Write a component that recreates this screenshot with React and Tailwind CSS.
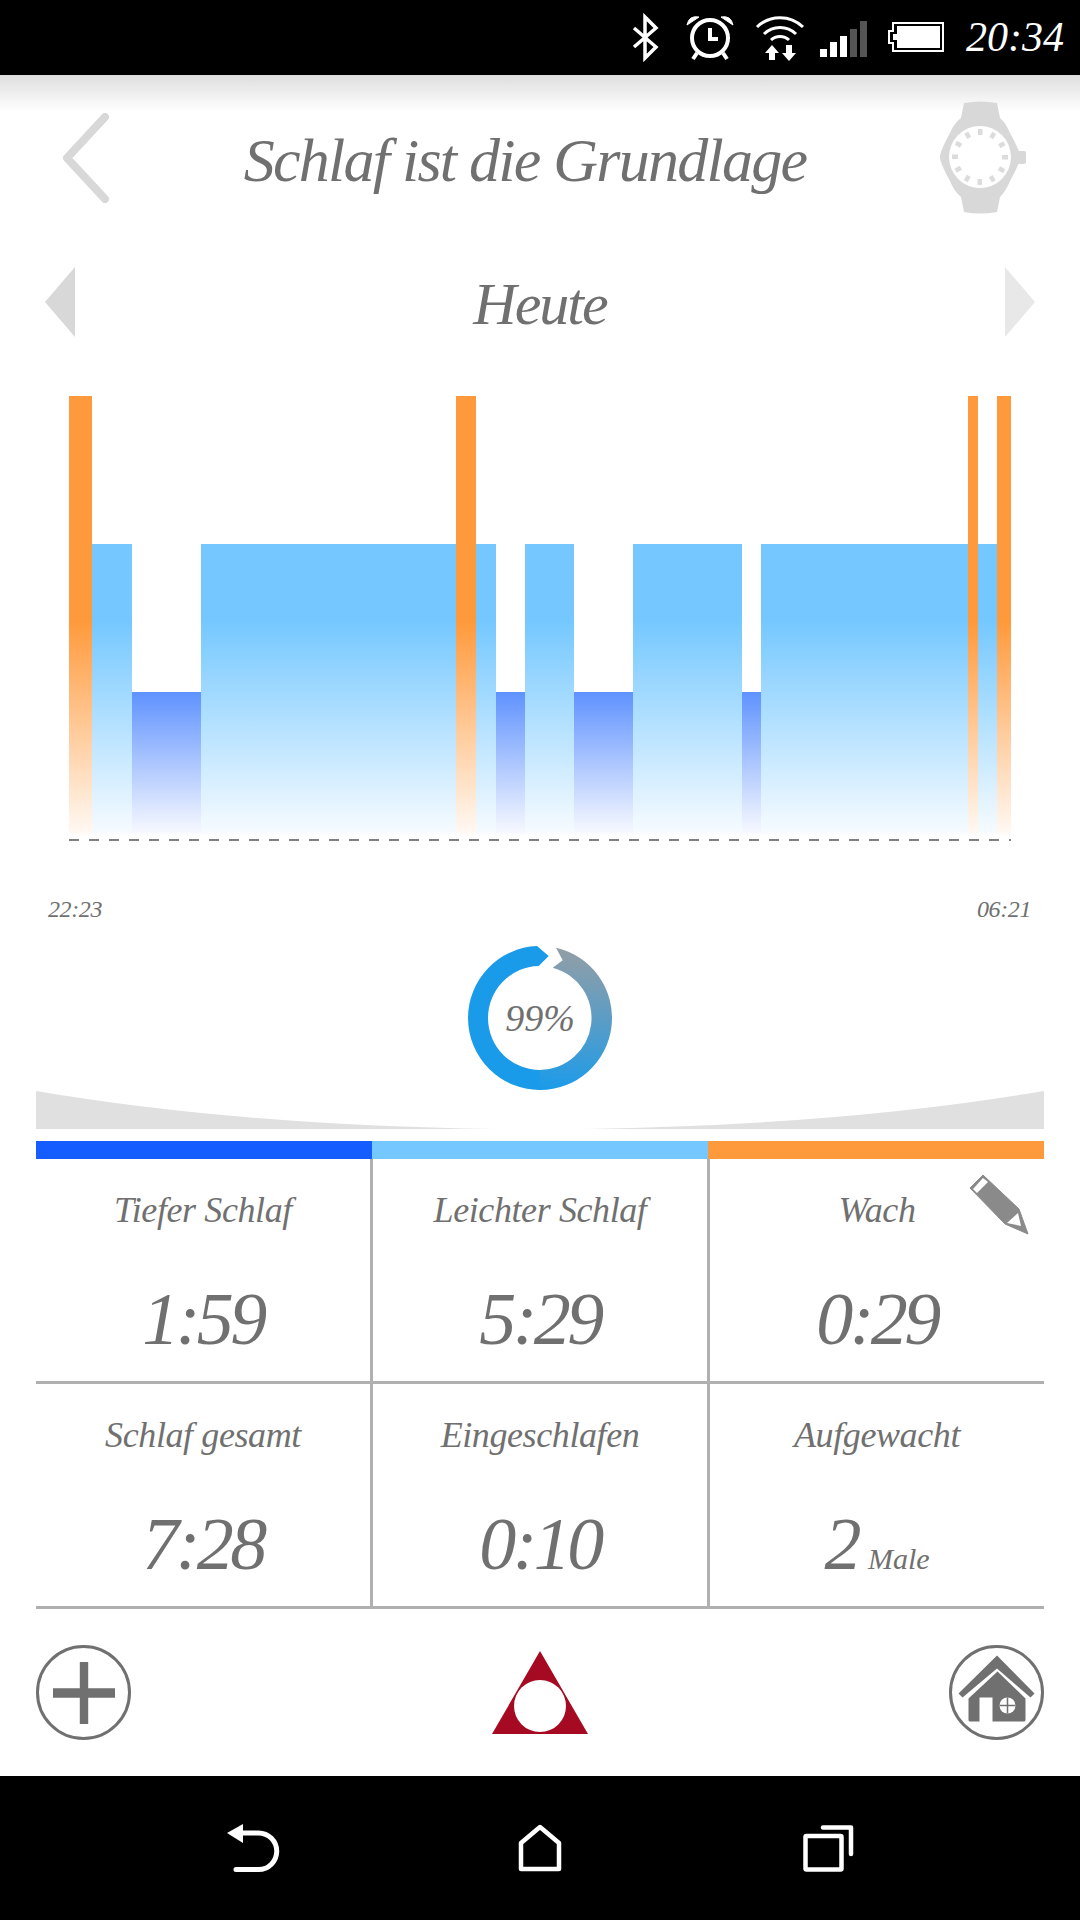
import React from 'react';

// Segment kinds of the sleep chart, each with its own height and fade
const kinds = {
  wake: 'h-[440px] bg-[linear-gradient(to_bottom,#ff9a3c_0,#ff9a3c_226px,#fff8f2_436px,#ffffff_440px)]',
  light: 'h-[292px] bg-[linear-gradient(to_bottom,#75c8ff_0,#75c8ff_78px,#f6fbff_288px,#ffffff_292px)]',
  deep: 'h-[144px] bg-[linear-gradient(to_bottom,#5f92ff_0,#f6f8ff_140px,#ffffff_144px)]',
};

const segments = [
  ['wake', 23], ['light', 40], ['deep', 69], ['light', 255], ['wake', 20], ['light', 20],
  ['deep', 29], ['light', 49], ['deep', 59], ['light', 109], ['deep', 19], ['light', 207],
  ['wake', 10], ['light', 19], ['wake', 14],
];

const stats = [
  { label: 'Tiefer Schlaf', value: '1:59' },
  { label: 'Leichter Schlaf', value: '5:29' },
  { label: 'Wach', value: '0:29', pencil: true },
  { label: 'Schlaf gesamt', value: '7:28' },
  { label: 'Eingeschlafen', value: '0:10' },
  { label: 'Aufgewacht', value: '2', unit: 'Male' },
];

const StatusIcons = () => (
  <>
    <svg width="28" height="50" viewBox="0 0 28 50" className="absolute left-[632px] top-[13px]" fill="none" stroke="#fff" strokeWidth="3.5">
      <path d="M2 15 24 34 13 45V4L24 15 2 34" />
    </svg>
    <svg width="52" height="50" viewBox="0 0 52 50" className="absolute left-[684px] top-[12px]" fill="none" stroke="#fff" strokeWidth="4">
      <circle cx="26" cy="26" r="18" />
      <path d="M26 16V27H34M13 41 9 47M39 41 43 47" />
      <path d="M3 13Q5 3 15 5ZM49 13Q47 3 37 5Z" fill="#fff" strokeWidth="1" />
    </svg>
    <svg width="52" height="52" viewBox="0 0 52 52" className="absolute left-[754px] top-[12px]" fill="none" stroke="#fff" strokeWidth="3">
      <path d="M3 15A33 33 0 0 1 49 15M10 22A23 23 0 0 1 42 22M17 28A13 13 0 0 1 35 28" />
      <path d="M18 33 25 41H21V48H15V41H11ZM32 33H38V41H42L35 49 28 41H32Z" fill="#fff" stroke="none" />
    </svg>
    <div className="absolute left-[820px] top-[21px] h-[36px] flex items-end gap-[3px]">
      <div className="w-[7px] h-[8px] bg-white" />
      <div className="w-[7px] h-[15px] bg-white" />
      <div className="w-[7px] h-[21px] bg-white" />
      <div className="w-[7px] h-[28px] bg-[#555555]" />
      <div className="w-[7px] h-[36px] bg-[#555555]" />
    </div>
    <svg width="56" height="30" viewBox="0 0 56 30" className="absolute left-[888px] top-[22px]">
      <path d="M5 1H55V29H5V21H1V9H5Z" fill="none" stroke="#fff" strokeWidth="2" />
      <path d="M9 4H52V26H9V18H5V12H9Z" fill="#fff" />
    </svg>
  </>
);

const Watch = () => (
  <svg width="86" height="114" viewBox="0 0 86 114">
    <path
      d="M24 2Q40-1 57 2L60 17Q66 22 70 32 80 50 80 56 80 62 70 80 66 90 60 96L57 111Q40 114 24 111L21 96Q14 90 10 80 0 62 0 56 0 50 10 32 14 22 21 17Z"
      fill="#d8d8d8"
    />
    <rect x="76" y="50" width="10" height="13" rx="2" fill="#d8d8d8" />
    <circle cx="40" cy="56" r="31" fill="#fff" />
    {[...Array(12)].map((_, i) => (
      <rect key={i} x="38" y="28" width="4.5" height="6" fill="#dcdcdc" transform={`rotate(${i * 30} 40 56)`} />
    ))}
  </svg>
);

const Ring = () => (
  <div className="relative w-[144px] h-[144px]">
    <svg width="144" height="144" viewBox="0 0 144 144">
      <defs>
        <linearGradient id="ringFade" gradientUnits="userSpaceOnUse" x1="88" y1="2" x2="72" y2="144">
          <stop offset="0" stopColor="#929ea6" />
          <stop offset="1" stopColor="#1a9bea" />
        </linearGradient>
      </defs>
      <path d="M69 .1A72 72 0 0 0 0 72 72 72 0 0 0 73 144V124A52 52 0 0 1 20 72 52 52 0 0 1 70.7 20L80.7 10Z" fill="#1a9bea" />
      <path d="M88 1.8A72 72 0 0 1 72 144V124A52 52 0 0 0 84.7 21.7L94.7 14.3Z" fill="url(#ringFade)" />
    </svg>
    <div className="absolute inset-0 flex items-center justify-center text-[38px] text-[#707070]">99%</div>
  </div>
);

const Pencil = () => (
  <svg width="60" height="61" viewBox="0 0 60 61" className="absolute left-[259px] top-[15px]">
    <path d="M14 1 1 14 36 50 59 60 50 35Z" fill="#8a8a8a" stroke="#8a8a8a" strokeWidth="1" strokeLinejoin="round" />
    <path d="M14 4 4 15 8 19 19 8Z" fill="#fff" />
    <path d="M38 49 49 39 52 52Z" fill="#fff" />
  </svg>
);

const House = () => (
  <svg width="78" height="76" viewBox="0 0 78 76" fill="#707070">
    <path d="M39 .5 .5 38.5 4.5 42.5 39 13.5 72.5 42.5 76.5 38.5Z" />
    <path d="M39.5 16.5 10.5 43.5V65Q10.5 66.5 12 66.5H21.5V42.5H34.5V66.5H66Q67.5 66.5 67.5 65V43.5Z" />
    <circle cx="49.5" cy="50.5" r="8" fill="#fff" />
    <path d="M49.5 42.5V58.5M41.5 50.5H57.5" stroke="#707070" strokeWidth="1.5" />
  </svg>
);

const App = () => {
  return (
    <div className="w-[1080px] h-[1920px] flex flex-col bg-white text-[#707070] italic [font-family:'Liberation_Serif',serif] overflow-hidden">
      {/* Status bar */}
      <div className="relative h-[75px] shrink-0 bg-black">
        <StatusIcons />
        <div className="absolute left-[966px] top-[12px] text-[42px] leading-[50px] text-white">20:34</div>
      </div>

      <main className="flex-1 flex flex-col">
        {/* Title */}
        <header className="h-[166px] pl-[62px] pr-[54px] flex items-center justify-between bg-[linear-gradient(to_bottom,#dedede_0,#ffffff_36px)]">
          <svg width="48" height="90" viewBox="0 0 48 90" fill="none" stroke="#d8d8d8" strokeWidth="8" strokeLinecap="round" strokeLinejoin="round">
            <path d="M43 4 5 45 43 86" />
          </svg>
          <h1 className="pt-[4px] text-[62px] leading-none tracking-[-1.75px] font-normal">Schlaf ist die Grundlage</h1>
          <Watch />
        </header>

        {/* Day switcher */}
        <div className="h-[122px] pl-[45px] pr-[45px] flex items-center justify-between">
          <svg width="30" height="70" viewBox="0 0 30 70"><path d="M30 0V70L0 35Z" fill="#d8d8d8" /></svg>
          <div className="pt-[4px] text-[60px] leading-none tracking-[-2px]">Heute</div>
          <svg width="30" height="70" viewBox="0 0 30 70"><path d="M0 0V70L30 35Z" fill="#e8e8e8" /></svg>
        </div>

        {/* Sleep chart */}
        <div className="pl-[69px] pt-[33px]">
          <div className="w-[942px] h-[440px] flex items-end">
            {segments.map(([kind, width], i) => (
              <div key={i} className={kinds[kind]} style={{ width }} />
            ))}
          </div>
          <div className="w-[942px] h-[2px] mt-[3px] bg-[repeating-linear-gradient(to_right,#808080_0,#808080_10px,transparent_10px,transparent_20px)]" />
        </div>
        <div className="pl-[48px] pr-[49px] mt-[56px] flex justify-between text-[24px] leading-[24px] tracking-[-0.4px]">
          <span>22:23</span>
          <span>06:21</span>
        </div>

        {/* Quality ring */}
        <div className="mt-[25px] flex justify-center">
          <Ring />
        </div>
        <svg width="1008" height="38" viewBox="0 0 1008 38" className="ml-[36px] mt-[1px]">
          <path d="M0 0Q200 34 460 38H0ZM1008 0Q808 34 549 38H1008Z" fill="#e0e0e0" />
        </svg>

        {/* Totals */}
        <div className="mx-[36px] mt-[12px]">
          <div className="h-[18px] flex">
            <div className="w-[336px] bg-[#155dff]" />
            <div className="w-[336px] bg-[#75c8ff]" />
            <div className="w-[336px] bg-[#ff9a3c]" />
          </div>
          <div className="grid grid-cols-[337px_337px_334px]">
            {stats.map((stat, i) => (
              <div key={stat.label} className={`relative h-[225px] flex flex-col items-center border-b-[3px] border-[#b0b0b0] ${i % 3 === 2 ? '' : 'border-r-[3px]'}`}>
                <div className="mt-[31px] text-[36px] leading-[40px] tracking-[-0.4px]">{stat.label}</div>
                <div className="mt-[49px] text-[74px] leading-[80px] tracking-[-3.5px]">
                  {stat.value}
                  {stat.unit && <span className="ml-[10px] text-[30px] tracking-normal">{stat.unit}</span>}
                </div>
                {stat.pencil && <Pencil />}
              </div>
            ))}
          </div>
        </div>

        {/* Bottom actions */}
        <div className="flex-1 px-[36px] flex items-center justify-between">
          <div className="w-[95px] h-[95px] rounded-full border-[3px] border-[#707070] flex items-center justify-center">
            <svg width="62" height="62" viewBox="0 0 59 59" fill="#707070">
              <path d="M25.5 0H33.5V25H59V34H33.5V59H25.5V34H0V25H25.5Z" />
            </svg>
          </div>
          <svg width="96" height="83" viewBox="0 0 96 83">
            <path d="M48 0 96 83H0Z" fill="#a50a22" />
            <circle cx="48" cy="55" r="26" fill="#fff" />
          </svg>
          <div className="w-[95px] h-[95px] rounded-full border-[3px] border-[#707070] flex items-center justify-center">
            <House />
          </div>
        </div>
      </main>

      {/* Navigation bar */}
      <nav className="relative h-[144px] shrink-0 bg-black">
        <svg width="55" height="52" viewBox="0 0 55 52" className="absolute left-[225px] top-[46px]" fill="none" stroke="#fff" strokeWidth="5" strokeLinecap="round">
          <path d="M2 11 18 2V21Z" fill="#fff" stroke="none" />
          <path d="M14 11H33.5A18.25 18.25 0 0 1 33.5 47.5H11" />
        </svg>
        <svg width="46" height="50" viewBox="0 0 46 50" className="absolute left-[517px] top-[48px]" fill="none" stroke="#fff" strokeWidth="4.5" strokeLinejoin="round">
          <path d="M4 19 23 3 42 19V45H4Z" />
        </svg>
        <svg width="52" height="50" viewBox="0 0 52 50" className="absolute left-[802px] top-[48px]" fill="none" stroke="#fff" strokeWidth="4.5" strokeLinejoin="round" strokeLinecap="round">
          <rect x="3.5" y="12" width="36" height="33.5" rx="1" />
          <path d="M21 3.5H49V30" />
        </svg>
      </nav>
    </div>
  );
};

export default App;
